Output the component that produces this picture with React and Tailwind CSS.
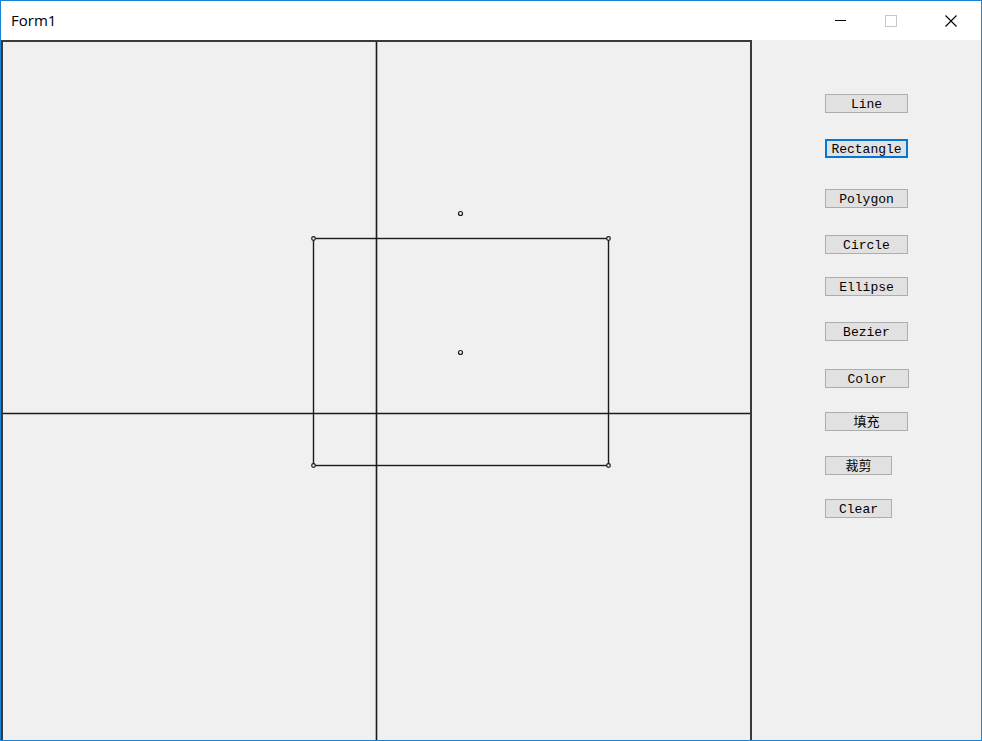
import React from 'react';

const buttons = [
  { label: 'Line', mt: 'mt-[54px]', w: 'w-[83px]' },
  { label: 'Rectangle', mt: 'mt-[26px]', w: 'w-[83px]', focused: true },
  { label: 'Polygon', mt: 'mt-[31px]', w: 'w-[83px]' },
  { label: 'Circle', mt: 'mt-[27px]', w: 'w-[83px]' },
  { label: 'Ellipse', mt: 'mt-[23px]', w: 'w-[83px]' },
  { label: 'Bezier', mt: 'mt-[26px]', w: 'w-[83px]' },
  { label: 'Color', mt: 'mt-[28px]', w: 'w-[84px]' },
  { label: '填充', mt: 'mt-[24px]', w: 'w-[83px]' },
  { label: '裁剪', mt: 'mt-[25px]', w: 'w-[67px]' },
  { label: 'Clear', mt: 'mt-[24px]', w: 'w-[67px]' },
];

function Canvas() {
  // drawing in page coordinates, svg viewBox starts at canvas inner corner
  const rect = { x1: 313, y1: 238, x2: 608, y2: 465 };
  const corners = [
    [rect.x1, rect.y1],
    [rect.x2, rect.y1],
    [rect.x1, rect.y2],
    [rect.x2, rect.y2],
  ];
  return (
    <div className="w-[751px] h-[702px] shrink-0 border-2 border-[#3a3a3a] bg-[#f0f0f0] overflow-hidden">
      <svg width="747" height="698" viewBox="3 42 747 698" className="block">
        <line x1="376.5" y1="40" x2="376.5" y2="745" stroke="#1a1a1a" strokeWidth="1.6" />
        <line x1="0" y1="413.5" x2="752" y2="413.5" stroke="#1a1a1a" strokeWidth="1.6" />
        <rect
          x={rect.x1 + 0.5}
          y={rect.y1 + 0.5}
          width={rect.x2 - rect.x1}
          height={rect.y2 - rect.y1}
          fill="none"
          stroke="#1a1a1a"
          strokeWidth="1.4"
        />
        {corners.map(([x, y], i) => (
          <circle key={i} cx={x + 0.5} cy={y + 0.5} r="1.8" fill="#f0f0f0" stroke="#1a1a1a" strokeWidth="1.2" />
        ))}
        <circle cx="460.5" cy="213.5" r="2" fill="#f0f0f0" stroke="#1a1a1a" strokeWidth="1.2" />
        <circle cx="460.5" cy="352.5" r="2" fill="#f0f0f0" stroke="#1a1a1a" strokeWidth="1.2" />
      </svg>
    </div>
  );
}

export default function App() {
  return (
    <div className="w-[982px] h-[741px] border border-[#1883d7] bg-white flex flex-col overflow-hidden">
      {/* Title bar */}
      <div className="h-[39px] shrink-0 flex items-center bg-white">
        <span
          className="pl-[10px] text-[15px] text-black"
          style={{ fontFamily: '"Open Sans", "Noto Sans", sans-serif' }}
        >
          Form1
        </span>
        <div className="ml-auto flex items-center h-full">
          <div className="w-[46px] h-full flex items-center justify-center">
            <div className="w-[11px] h-px bg-black" />
          </div>
          <div className="w-[46px] h-full flex items-center justify-center ml-[5px]">
            <div className="w-[12px] h-[12px] border border-[#c6c6c6]" />
          </div>
          <div className="w-[46px] h-full flex items-center justify-center ml-[14px] mr-[7px]">
            <svg width="12" height="12" viewBox="0 0 12 12">
              <path d="M0.5 0.5 L11.5 11.5 M11.5 0.5 L0.5 11.5" stroke="#000" strokeWidth="1.1" />
            </svg>
          </div>
        </div>
      </div>

      {/* Body */}
      <div className="flex flex-1 bg-[#f0f0f0]">
        <Canvas />
        <div className="flex-1 flex flex-col items-start pl-[73px]">
          {buttons.map((b) => (
            <button
              key={b.label}
              className={`${b.mt} ${b.w} h-[19px] flex items-center justify-center pt-[2px] bg-[#e1e1e1] text-[13px] leading-none text-black ${
                b.focused ? 'border-2 border-[#0078d7]' : 'border border-[#adadad]'
              }`}
              style={{ fontFamily: '"Liberation Mono", "Noto Sans CJK SC", monospace' }}
            >
              {b.label}
            </button>
          ))}
        </div>
      </div>
    </div>
  );
}
